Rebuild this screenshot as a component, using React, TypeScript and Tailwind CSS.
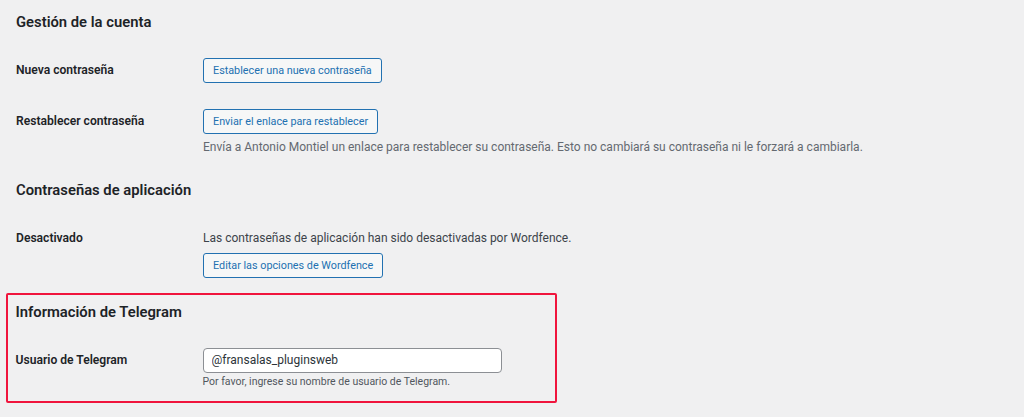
import React from 'react';

const Row: React.FC<{ label: string; labelClass?: string; children: React.ReactNode; className?: string }> = ({
  label,
  labelClass = 'leading-[25px]',
  children,
  className = '',
}) => (
  <div className={`flex ${className}`}>
    <div className={`w-[187px] shrink-0 text-[12.1px] font-semibold ${labelClass}`}>{label}</div>
    <div className="flex flex-col items-start">{children}</div>
  </div>
);

const WpButton: React.FC<{ children: React.ReactNode }> = ({ children }) => (
  <button className="h-[25px] px-[9px] border border-[#2271b1] rounded-[3px] bg-[#f6f7f7] text-[#2271b1] text-[10.8px] leading-[23px] whitespace-nowrap">
    {children}
  </button>
);

const App: React.FC = () => {
  return (
    <div className="min-h-screen bg-[#f0f0f1] text-[#1d2327] font-['Roboto',sans-serif] pl-4 pt-[12px]">
      {/* Gestión de la cuenta */}
      <h2 className="text-[14.8px] leading-[20px] font-semibold">Gestión de la cuenta</h2>

      <Row label="Nueva contraseña" className="mt-[26px]">
        <WpButton>Establecer una nueva contraseña</WpButton>
      </Row>

      <Row label="Restablecer contraseña" className="mt-[26px]">
        <WpButton>Enviar el enlace para restablecer</WpButton>
        <p className="mt-[5px] text-[12px] leading-[16px] text-[#646970] whitespace-nowrap">
          Envía a Antonio Montiel un enlace para restablecer su contraseña. Esto no cambiará su contraseña ni le forzará a cambiarla.
        </p>
      </Row>

      {/* Contraseñas de aplicación */}
      <h2 className="mt-[25px] text-[14.8px] leading-[20px] font-semibold">Contraseñas de aplicación</h2>

      <Row label="Desactivado" labelClass="leading-[16px]" className="mt-[30px]">
        <p className="text-[12px] leading-[16px] text-[#3c434a] whitespace-nowrap">
          Las contraseñas de aplicación han sido desactivadas por Wordfence.
        </p>
        <div className="mt-[6px]">
          <WpButton>Editar las opciones de Wordfence</WpButton>
        </div>
      </Row>

      {/* Información de Telegram */}
      <div className="mt-[15px] -ml-[10px] w-[551px] h-[110px] border-[2.5px] border-[#f0153d] rounded-[2px] pl-[7.5px] pt-[6.5px]">
        <h2 className="text-[14.8px] leading-[20px] font-semibold">Información de Telegram</h2>
        <Row label="Usuario de Telegram" className="mt-[26px]">
          <input
            type="text"
            defaultValue="@fransalas_pluginsweb"
            className="w-[299px] h-[25px] px-[8px] bg-white border border-[#8c8f94] rounded-[4px] text-[12px] text-[#2c3338] outline-none"
          />
          <p className="mt-[1px] text-[10.5px] leading-[16px] text-[#50575e] whitespace-nowrap">
            Por favor, ingrese su nombre de usuario de Telegram.
          </p>
        </Row>
      </div>
    </div>
  );
};

export default App;
